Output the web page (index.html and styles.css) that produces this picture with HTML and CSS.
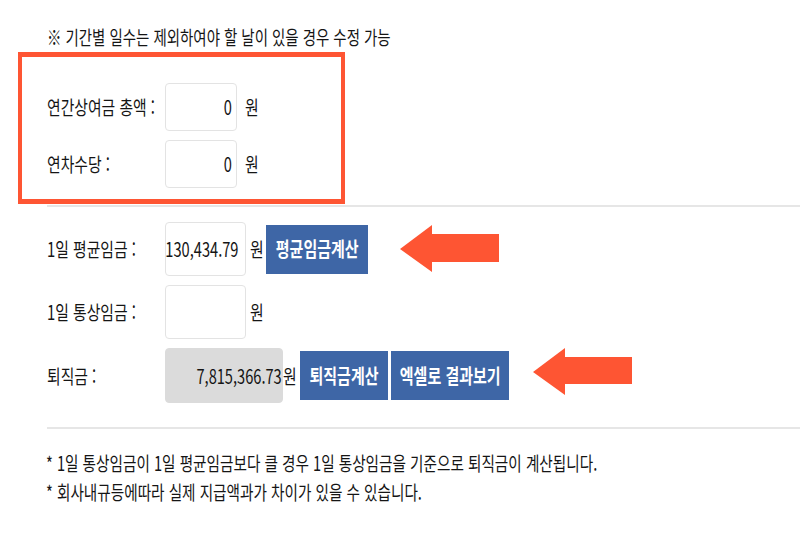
FILE: index.html
```html
<!DOCTYPE html>
<html lang="ko">
<head>
<meta charset="utf-8">
<title>퇴직금 계산</title>
<link rel="stylesheet" href="styles.css">
</head>
<body>
<div class="page">
  <p class="note"><span class="sq">※ 기간별 일수는 제외하여야 할 날이 있을 경우 수정 가능</span></p>

  <div class="group group-top">
    <div class="row row-48">
      <div class="label"><span class="sq">연간상여금 총액 :</span></div>
      <div class="field field-sm"><span class="sq sq-right">0</span></div>
      <div class="won won-wide"><span class="sq">원</span></div>
    </div>
    <div class="row row-48">
      <div class="label"><span class="sq">연차수당 :</span></div>
      <div class="field field-sm"><span class="sq sq-right">0</span></div>
      <div class="won won-wide"><span class="sq">원</span></div>
    </div>
  </div>

  <hr class="divider divider-1">

  <div class="group group-mid">
    <div class="row row-54">
      <div class="label"><span class="sq">1일 평균임금 :</span></div>
      <div class="field field-md"><span class="sq sq-right">130,434.79</span></div>
      <div class="won won-mid"><span class="sq">원</span></div>
      <button class="btn btn-avg" type="button"><span class="sq sq-center">평균임금계산</span></button>
    </div>
    <div class="row row-54">
      <div class="label"><span class="sq">1일 통상임금 :</span></div>
      <div class="field field-md"></div>
      <div class="won won-mid"><span class="sq">원</span></div>
    </div>
    <div class="row row-55">
      <div class="label"><span class="sq">퇴직금 :</span></div>
      <div class="field field-result"><span class="sq sq-right">7,815,366.73</span></div>
      <div class="won"><span class="sq">원</span></div>
      <div class="btn-group">
        <button class="btn btn-calc" type="button"><span class="sq sq-center">퇴직금계산</span></button>
        <button class="btn btn-excel" type="button"><span class="sq sq-center">엑셀로 결과보기</span></button>
      </div>
    </div>
  </div>

  <hr class="divider divider-2">

  <div class="footer">
    <p><span class="sq">* 1일 통상임금이 1일 평균임금보다 클 경우 1일 통상임금을 기준으로 퇴직금이 계산됩니다.</span></p>
    <p><span class="sq">* 회사내규등에따라 실제 지급액과가 차이가 있을 수 있습니다.</span></p>
  </div>

  <div class="highlight-box"></div>
  <svg class="arrow arrow-1" viewBox="0 0 99 47" aria-hidden="true">
    <polygon points="0,24 32,0 32,9 99,9 99,37 32,37 32,47"/>
  </svg>
  <svg class="arrow arrow-2" viewBox="0 0 99 47" aria-hidden="true">
    <polygon points="0,24 32,0 32,9 99,9 99,36 32,36 32,47"/>
  </svg>
</div>
</body>
</html>
```

FILE: styles.css
```css
html, body {
  margin: 0;
  padding: 0;
  background: #ffffff;
}

.page {
  position: relative;
  width: 800px;
  height: 555px;
  overflow: hidden;
  font-family: "Noto Sans CJK KR", "Noto Sans", sans-serif;
  color: #151515;
}

/* the reference typeface is horizontally condensed */
.sq {
  display: inline-block;
  white-space: nowrap;
  transform: scaleX(0.75);
  transform-origin: left center;
}

.sq-right { transform-origin: right center; }
.sq-center { transform-origin: center center; }

.note {
  margin: 0;
  padding: 26px 0 0 47px;
  height: 22px;
  line-height: 22px;
  font-size: 19.3px;
}

.group {
  display: flex;
  flex-direction: column;
  gap: 9px;
  padding-left: 47px;
}

.group-top { margin-top: 35px; }
.group-mid { margin-top: 15px; }

.row {
  display: flex;
  align-items: center;
}

.row-48 { height: 48px; }
.row-54 { height: 54px; }
.row-55 { height: 55px; }

.label {
  width: 118px;
  flex: none;
  font-size: 19.8px;
  line-height: 24px;
}

.field {
  box-sizing: border-box;
  display: flex;
  align-items: center;
  justify-content: flex-end;
  flex: none;
  height: 100%;
  border: 1px solid #e3e3e3;
  border-radius: 4px;
  background: #ffffff;
  font-size: 19.5px;
  line-height: 24px;
  color: #151515;
}

.field-sm {
  width: 72px;
  padding-right: 4px;
}

.field-md {
  width: 81px;
  padding-right: 7px;
}

.field-result {
  width: 118px;
  padding-right: 0;
  border-color: #dbdbdb;
  background: #dbdbdb;
}

.won {
  width: 15px;
  flex: none;
  font-size: 19.8px;
  line-height: 24px;
}

.won-wide { margin-left: 8px; }
.won-mid { margin-left: 4px; }

.btn {
  box-sizing: border-box;
  display: flex;
  align-items: center;
  justify-content: center;
  flex: none;
  height: 49px;
  margin: 0;
  padding: 0;
  border: none;
  background: #3e66a6;
  color: #ffffff;
  font-family: "Noto Sans CJK KR", "Noto Sans", sans-serif;
  font-size: 20px;
  font-weight: 700;
  line-height: 24px;
}

.btn-avg {
  width: 102px;
  margin-left: 1px;
}

.btn-group {
  display: flex;
  gap: 3px;
  margin-left: 2px;
}

.btn-calc { width: 88px; }
.btn-excel { width: 118px; }

.divider {
  height: 2px;
  margin: 0 0 0 47px;
  border: none;
  background: #e6e6e6;
}

.divider-1 { margin-top: 17px; }
.divider-2 { margin-top: 24px; }

.footer {
  padding: 19px 0 0 46px;
}

.footer p {
  margin: 0;
  font-size: 19.5px;
  line-height: 29px;
}

/* annotation overlays */
.highlight-box {
  position: absolute;
  left: 18px;
  top: 52px;
  box-sizing: border-box;
  width: 327px;
  height: 152px;
  border-style: solid;
  border-color: #fe5533;
  border-width: 5px 4px;
}

.arrow {
  position: absolute;
  width: 99px;
  height: 47px;
  fill: #fe5533;
}

.arrow-1 {
  left: 400px;
  top: 225px;
}

.arrow-2 {
  left: 533px;
  top: 348px;
}
```
